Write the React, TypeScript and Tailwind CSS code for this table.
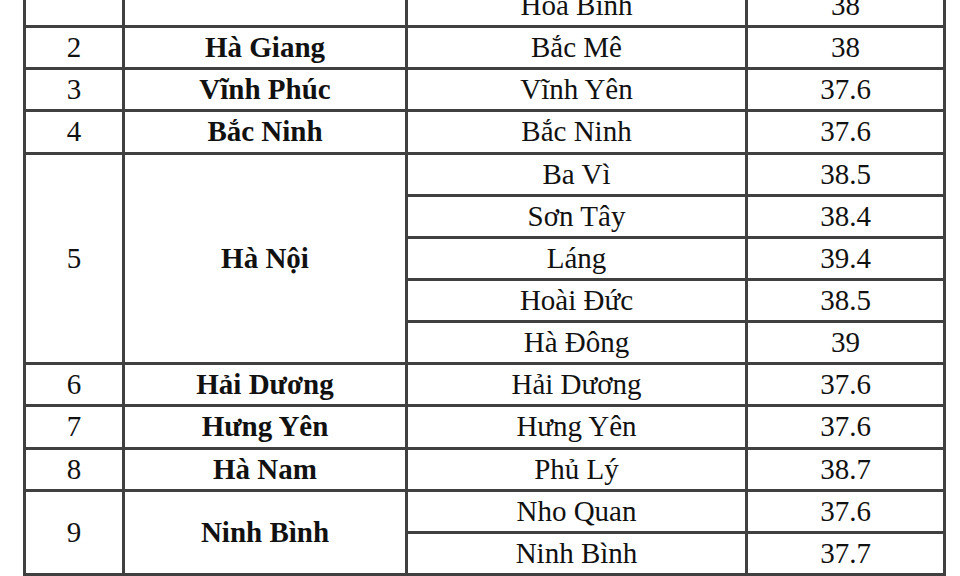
import React from "react";

type Row = { no?: string; prov?: string; span?: number; station: string; val: string; skip?: boolean };

const rows: Row[] = [
  { no: "", prov: "", station: "Hòa Bình", val: "38" },
  { no: "2", prov: "Hà Giang", station: "Bắc Mê", val: "38" },
  { no: "3", prov: "Vĩnh Phúc", station: "Vĩnh Yên", val: "37.6" },
  { no: "4", prov: "Bắc Ninh", station: "Bắc Ninh", val: "37.6" },
  { no: "5", prov: "Hà Nội", span: 5, station: "Ba Vì", val: "38.5" },
  { skip: true, station: "Sơn Tây", val: "38.4" },
  { skip: true, station: "Láng", val: "39.4" },
  { skip: true, station: "Hoài Đức", val: "38.5" },
  { skip: true, station: "Hà Đông", val: "39" },
  { no: "6", prov: "Hải Dương", station: "Hải Dương", val: "37.6" },
  { no: "7", prov: "Hưng Yên", station: "Hưng Yên", val: "37.6" },
  { no: "8", prov: "Hà Nam", station: "Phủ Lý", val: "38.7" },
  { no: "9", prov: "Ninh Bình", span: 2, station: "Nho Quan", val: "37.6" },
  { skip: true, station: "Ninh Bình", val: "37.7" },
];

const spanClass: Record<number, string> = {
  1: "row-span-1",
  2: "row-span-2",
  5: "row-span-5",
};

export default function App() {
  const cells: React.ReactNode[] = [];
  rows.forEach((r, i) => {
    if (!r.skip) {
      const s = spanClass[r.span ?? 1];
      cells.push(
        <div key={`n${i}`} className={`bg-white flex items-center justify-center ${s}`}>
          {r.no}
        </div>
      );
      cells.push(
        <div key={`p${i}`} className={`bg-white flex items-center justify-center font-bold ${s}`}>
          {r.prov}
        </div>
      );
    }
    cells.push(
      <div key={`s${i}`} className="bg-white flex items-center justify-center">
        {r.station}
      </div>
    );
    cells.push(
      <div key={`v${i}`} className="bg-white flex items-center justify-center">
        {r.val}
      </div>
    );
  });

  return (
    <div className="w-[960px] h-[576px] overflow-hidden bg-white">
      <div
        className="ml-[23px] mt-[-17px] w-[923px] grid grid-cols-[96px_280px_337px_195px] auto-rows-[39.15px] gap-[3px] p-[3px] bg-[#404040] text-[29px] leading-none text-[#111111]"
        style={{ fontFamily: '"Liberation Serif", "Times New Roman", serif', gridAutoFlow: "row" }}
      >
        {cells}
      </div>
    </div>
  );
}
